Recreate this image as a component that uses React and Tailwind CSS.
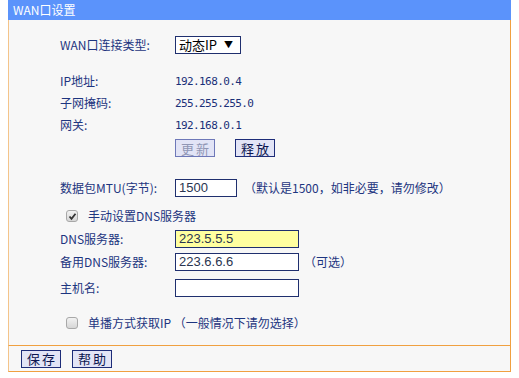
import React from 'react';

const FONT = { fontFamily: '"Noto Sans CJK SC", "Liberation Sans", sans-serif' };

// ── small pieces ──────────────────────────────────────────────────────────────
const Label = ({ children }) => (
  <div className="w-[115px] shrink-0 text-[12px] leading-none text-[#1d3580]">{children}</div>
);

const Value = ({ children }) => (
  <div className="text-[11px] leading-none tracking-[-0.6px] text-[#1a2f78]" style={{ fontFamily: '"DejaVu Sans Mono", monospace' }}>
    {children}
  </div>
);

const TextBox = ({ value, width = 'w-[124px]', yellow }) => (
  <div
    className={`${width} h-[18px] border border-[#1f2f6e] ${yellow ? 'bg-[#ffff9f]' : 'bg-white'} flex items-center px-[3px] text-[13px] text-[#2a3550]`}
    style={{ fontFamily: '"Liberation Sans", Arial, sans-serif' }}
  >
    {value}
  </div>
);

const Btn = ({ children, disabled }) => (
  <div
    className={`w-[40px] h-[18px] flex items-center justify-center border text-[13px] tracking-[2px] indent-[2px] leading-none bg-[#e2e4f6] ${
      disabled ? 'border-[#6e78b8] text-[#9096b4]' : 'border-[#1d2c78] text-[#0c1650]'
    }`}
  >
    {children}
  </div>
);

const Check = ({ checked }) => (
  <div className="w-[12px] h-[12px] rounded-[3px] border border-[#a8a8a8] bg-gradient-to-b from-[#f2f2f2] to-[#d6d6d6] flex items-center justify-center">
    {checked && (
      <svg width="9" height="9" viewBox="0 0 9 9">
        <path d="M1.5 4.5 L3.5 6.8 L7.5 1.8" fill="none" stroke="#333" strokeWidth="1.8" />
      </svg>
    )}
  </div>
);

// ── App ───────────────────────────────────────────────────────────────────────
const App = () => (
  <div className="w-[519px] h-[378px] bg-white" style={FONT}>
    <div className="ml-[8px] w-[503px]">
      {/* header */}
      <div className="h-[20px] bg-[#5b93fb] flex items-center pl-[5px] text-[12px] text-white leading-none">
        WAN口设置
      </div>

      {/* main form */}
      <div className="bg-[#f7f7f7] border-l border-r border-b border-l-[#f4c48a] border-r-[#f0a040] border-b-[#f0a040] pl-[51px] pt-[16px] pb-[15px]">
        <div className="flex items-center h-[18px]">
          <Label>WAN口连接类型:</Label>
          <div className="w-[66px] h-[18px] border border-[#1f2f6e] bg-white flex items-center justify-between px-[3px] text-[13px] text-black">
            <span>动态IP</span>
            <span className="text-[9px] mr-[4px]">▼</span>
          </div>
        </div>

        <div className="mt-[16px] flex items-center h-[22px]">
          <Label>IP地址:</Label>
          <Value>192.168.0.4</Value>
        </div>
        <div className="flex items-center h-[22px]">
          <Label>子网掩码:</Label>
          <Value>255.255.255.0</Value>
        </div>
        <div className="flex items-center h-[22px]">
          <Label>网关:</Label>
          <Value>192.168.0.1</Value>
        </div>
        <div className="mt-[3px] flex items-center gap-[20px] pl-[115px]">
          <Btn disabled>更新</Btn>
          <Btn>释放</Btn>
        </div>

        <div className="mt-[22px] flex items-center h-[18px]">
          <Label>数据包MTU(字节):</Label>
          <TextBox value="1500" width="w-[62px]" />
          <span className="ml-[7px] text-[12px] text-[#1d3580]">（默认是1500，如非必要，请勿修改）</span>
        </div>

        <div className="mt-[12px] flex items-center h-[14px] pl-[6px] gap-[10px]">
          <Check checked />
          <span className="text-[12px] text-[#1d3580]">手动设置DNS服务器</span>
        </div>

        <div className="mt-[7px] flex items-center h-[18px]">
          <Label>DNS服务器:</Label>
          <TextBox value="223.5.5.5" yellow />
        </div>
        <div className="mt-[5px] flex items-center h-[18px]">
          <Label>备用DNS服务器:</Label>
          <TextBox value="223.6.6.6" />
          <span className="ml-[5px] text-[12px] text-[#1d3580]">（可选）</span>
        </div>
        <div className="mt-[8px] flex items-center h-[18px]">
          <Label>主机名:</Label>
          <TextBox value="" />
        </div>

        <div className="mt-[19px] flex items-center h-[14px] pl-[6px] gap-[10px]">
          <Check />
          <span className="text-[12px] text-[#1d3580]">单播方式获取IP （一般情况下请勿选择）</span>
        </div>
      </div>

      {/* button bar */}
      <div className="h-[26px] bg-[#f7f7f7] border-l border-r border-b border-l-[#f4c48a] border-r-[#f0a040] border-b-[#f0a040] flex items-center pl-[12px] gap-[11px]">
        <Btn>保存</Btn>
        <Btn>帮助</Btn>
      </div>
    </div>
  </div>
);

export default App;
